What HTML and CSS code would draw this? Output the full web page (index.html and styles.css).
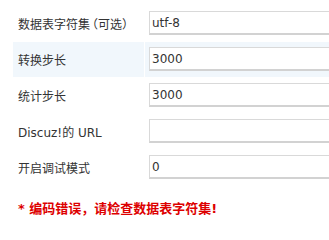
FILE: index.html
```html
<!DOCTYPE html>
<html>
<head>
<meta charset="utf-8">
<link rel="stylesheet" href="styles.css">
</head>
<body>
<div class="page">
  <div class="form">
    <div class="label">数据表字符集<span class="paren">（可选）</span></div>
    <div class="field"><input class="text" type="text" value="utf-8"></div>
    <div class="label hl">转换步长</div>
    <div class="field hl"><input class="text" type="text" value="3000"></div>
    <div class="label">统计步长</div>
    <div class="field"><input class="text" type="text" value="3000"></div>
    <div class="label">Discuz!的 URL</div>
    <div class="field"><input class="text" type="text" value=""></div>
    <div class="label">开启调试模式</div>
    <div class="field"><input class="text" type="text" value="0"></div>
  </div>
  <div class="error">* 编码错误，请检查数据表字符集!</div>
</div>
</body>
</html>
```
FILE: styles.css
```css
html, body {
  margin: 0;
  padding: 0;
  background: #ffffff;
  overflow: hidden;
}
body {
  font-family: "DejaVu Sans", "Noto Sans CJK SC", sans-serif;
  font-size: 12px;
  color: #333333;
}
.page {
  width: 329px;
  height: 226px;
  overflow: hidden;
}
.form {
  display: grid;
  grid-template-columns: 131px 220px;
  column-gap: 1px;
  row-gap: 1px;
  padding: 6px 0 0 13px;
}
.label {
  height: 35px;
  padding-left: 5px;
  display: flex;
  align-items: center;
  color: #333333;
  white-space: nowrap;
}
.paren {
  font-feature-settings: "halt" 1;
  padding: 0 2px;
}
.field {
  height: 35px;
  padding: 5px 0 0 4px;
  box-sizing: border-box;
}
.hl {
  background: #f1f7fc;
}
.text {
  box-sizing: border-box;
  width: 216px;
  height: 24px;
  margin: 0;
  padding: 0 0 0 2px;
  border: 1px solid #d9d9d9;
  border-bottom: 2px solid #d2d2d2;
  background: #ffffff;
  font-family: "DejaVu Sans", "Noto Sans CJK SC", sans-serif;
  font-size: 12px;
  color: #333333;
  outline: none;
}
.error {
  margin: 16px 0 0 18px;
  color: #dd0000;
  font-weight: bold;
  font-size: 13px;
  line-height: 16px;
  white-space: nowrap;
}
```
